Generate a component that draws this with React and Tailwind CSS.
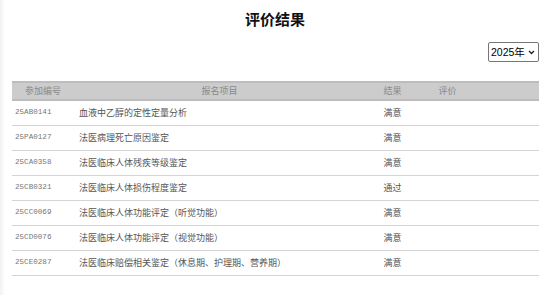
const rows = [
  { code: '25AB0141', name: '血液中乙醇的定性定量分析', result: '满意' },
  { code: '25PA0127', name: '法医病理死亡原因鉴定', result: '满意' },
  { code: '25CA0358', name: '法医临床人体残疾等级鉴定', result: '满意' },
  { code: '25CB0321', name: '法医临床人体损伤程度鉴定', result: '通过' },
  { code: '25CC0069', name: '法医临床人体功能评定（听觉功能）', result: '满意' },
  { code: '25CD0076', name: '法医临床人体功能评定（视觉功能）', result: '满意' },
  { code: '25CE0287', name: '法医临床赔偿相关鉴定（休息期、护理期、营养期）', result: '满意' },
]

const cols = 'grid grid-cols-[62px_291px_55px_55px_1fr]'

export default function App() {
  return (
    <div className="min-h-[295px] bg-white shadow-[inset_5px_0_4px_-3px_rgba(0,0,0,0.07)] font-['Noto_Sans_CJK_SC',sans-serif]">
      <h1 className="pt-[9px] text-center text-[15px] font-bold leading-[20px] text-[#111]">评价结果</h1>

      <div className="flex justify-end pr-[11px] pt-[13px]">
        <div className="relative flex h-[20px]">
          <select
            defaultValue="2025"
            className="block h-[20px] w-[51px] appearance-none rounded-[2px] border border-[#767676] bg-white pl-[2px] pr-[12px] font-['Liberation_Sans','Noto_Sans_CJK_SC',sans-serif] text-[10.5px] leading-none text-black"
          >
            <option value="2025">2025年</option>
            <option value="2024">2024年</option>
          </select>
          <svg
            className="pointer-events-none absolute right-[4px] top-[8px]"
            width="7"
            height="5"
            viewBox="0 0 7 5"
            fill="none"
          >
            <path d="M1 1l2.5 2.5L6 1" stroke="#222" strokeWidth="1.3" />
          </svg>
        </div>
      </div>

      <div className="ml-[12px] mr-[11px] mt-[19px] text-[9px]">
        <div className={`${cols} h-[20px] items-center border-y-2 border-y-[#bdbdbd] bg-[#cccccc] text-[#8a8a8a]`}>
          <div className="text-center">参加编号</div>
          <div className="text-center">报名项目</div>
          <div className="text-center">结果</div>
          <div className="text-center">评价</div>
          <div />
        </div>
        {rows.map((r) => (
          <div key={r.code} className={`${cols} h-[25px] items-center border-b-[1.5px] border-[#d4d4d4] text-[#555]`}>
            <div className="pl-[3px] font-['Liberation_Mono',monospace] text-[7.6px] text-[#777]">{r.code}</div>
            <div className="pl-[5px]">{r.name}</div>
            <div className="text-center">{r.result}</div>
            <div />
            <div />
          </div>
        ))}
      </div>
    </div>
  )
}
